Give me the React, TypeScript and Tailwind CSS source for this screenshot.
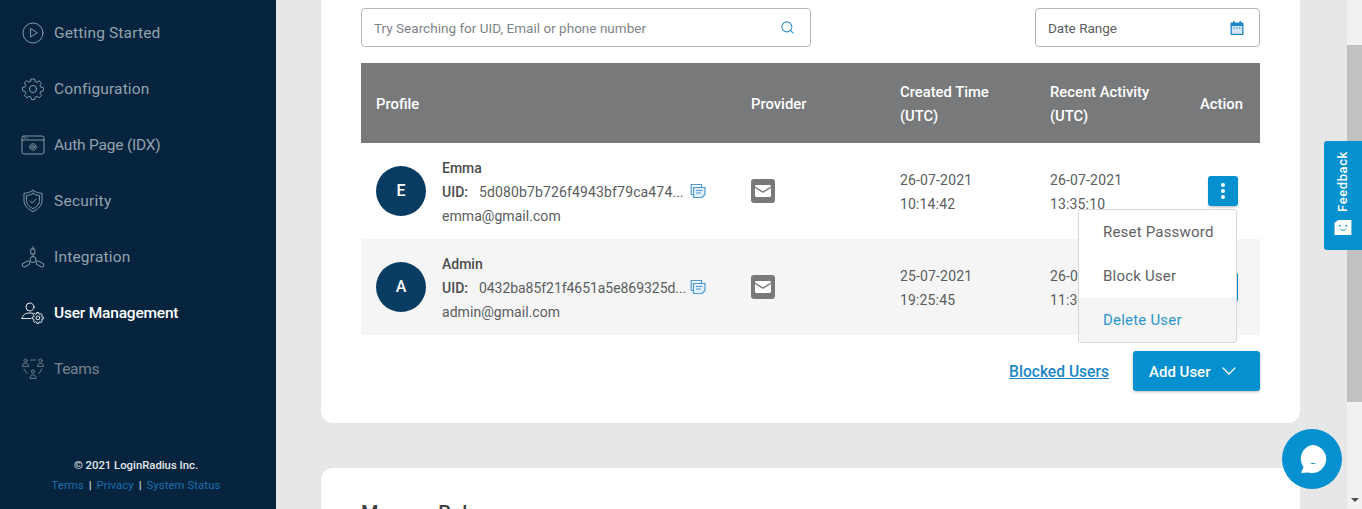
import { ChevronDown, Search } from 'lucide-react';
import type { ReactNode } from 'react';

const font = 'font-["Roboto",sans-serif]';

function Ico({ children }: { children: ReactNode }) {
  return (
    <svg viewBox="0 0 24 24" fill="none" stroke="currentColor" strokeWidth="0.9" strokeLinecap="round" strokeLinejoin="round" className="h-[24px] w-[24px] shrink-0">
      {children}
    </svg>
  );
}

const GearPath = 'M10.3 2h3.4l.5 2.6 1.7.7 2.2-1.5 2.4 2.4-1.5 2.2.7 1.7 2.6.5v3.4l-2.6.5-.7 1.7 1.5 2.2-2.4 2.4-2.2-1.5-1.7.7-.5 2.6h-3.4l-.5-2.6-1.7-.7-2.2 1.5-2.4-2.4 1.5-2.2-.7-1.7L1.5 13.8v-3.4l2.6-.5.7-1.7-1.5-2.2 2.4-2.4 2.2 1.5 1.7-.7z';

const navItems: { label: string; active?: boolean; dim?: boolean; track: string; icon: ReactNode }[] = [
  {
    label: 'Getting Started',
    track: 'tracking-[0.15px]',
    icon: (
      <Ico>
        <circle cx="12" cy="12" r="10" />
        <path d="M9.5 8v8l6.5-4z" />
      </Ico>
    ),
  },
  {
    label: 'Configuration',
    track: 'tracking-[0.15px]',
    icon: (
      <Ico>
        <path d={GearPath} />
        <circle cx="12" cy="12" r="3.6" />
      </Ico>
    ),
  },
  {
    label: 'Auth Page (IDX)',
    track: 'tracking-[-0.2px]',
    icon: (
      <Ico>
        <rect x="1" y="3" width="22" height="18" rx="2" />
        <path d="M1 7h22M3.2 5h.6M5.6 5h.6" />
        <circle cx="12" cy="14" r="1.4" />
        <circle cx="12" cy="14" r="3.2" strokeDasharray="1.4 0.6" />
      </Ico>
    ),
  },
  {
    label: 'Security',
    track: 'tracking-[0.25px]',
    icon: (
      <Ico>
        <path d="M12 1.5c3 1.8 5.6 2.6 9 2.8v7.2c0 5-3.6 8.6-9 11-5.400-2.400-9-6-9-11V4.300c3.400-.2 6-1 9-2.800z" />
        <path d="M12 4.500c2.200 1.300 4.200 1.900 6.500 2.100v5c0 3.600-2.600 6.200-6.500 8-3.900-1.800-6.500-4.400-6.500-8v-5c2.300-.2 4.300-.8 6.500-2.100z" />
        <path d="M9 11.800l2.200 2.200 4-4" />
      </Ico>
    ),
  },
  {
    label: 'Integration',
    track: 'tracking-[0.2px]',
    icon: (
      <Ico>
        <path d="M12 1.500v2.500M10.200 4h3.600v5h-3.600zM12 9v2.500" />
        <circle cx="12" cy="14.500" r="3" />
        <rect x="15" y="17" width="8" height="4" rx="2" transform="rotate(30 19 19)" />
        <rect x="1" y="17" width="8" height="4" rx="2" transform="rotate(-30 5 19)" />
      </Ico>
    ),
  },
  {
    label: 'User Management',
    active: true,
    track: 'tracking-[-0.2px]',
    icon: (
      <Ico>
        <circle cx="9" cy="6" r="4" />
        <path d="M1 17.500c.6-3.600 3.200-5.500 8-5.500 1.200 0 2.300.1 3.200.4M1 17.500h9" />
        <g transform="translate(10.500 10.500) scale(.53)">
          <path d={GearPath} strokeWidth="1.700" />
          <circle cx="12" cy="12" r="3.600" strokeWidth="1.700" />
        </g>
      </Ico>
    ),
  },
  {
    label: 'Teams',
    dim: true,
    track: 'tracking-[-0.3px]',
    icon: (
      <Ico>
        <circle cx="4.500" cy="3.500" r="1.600" />
        <path d="M1.500 9c0-1.800 1.200-2.800 3-2.800s3 1 3 2.800z" />
        <circle cx="19.500" cy="3.500" r="1.600" />
        <path d="M16.500 9c0-1.800 1.200-2.800 3-2.800s3 1 3 2.800z" />
        <circle cx="12" cy="14.500" r="1.600" />
        <path d="M9 21c0-2 1.200-3.200 3-3.200s3 1.200 3 3.200z" />
        <path d="M9.500 3h5M3 12l3 4.500M21 12l-3 4.500" />
      </Ico>
    ),
  },
];

function Sidebar() {
  return (
    <aside className="flex h-full w-[276px] shrink-0 flex-col bg-[#06243e]">
      <nav className="flex flex-col pl-[21px] pt-[5px]">
        {navItems.map((item) => (
          <div
            key={item.label}
            className={`flex h-[56px] items-center gap-[9px] text-[15.500px] ${item.track} ${
              item.active ? 'font-medium text-white' : item.dim ? 'text-[#77858f]' : 'text-[#92a2ae]'
            }`}
          >
            {item.icon}
            <span className="pt-[2px]">{item.label}</span>
          </div>
        ))}
      </nav>
      <div className="mt-auto pb-[13px] pr-[4px] text-center text-[11.300px] leading-[20px]">
        <div className="font-medium text-[#e4e8ea]">© 2021 LoginRadius Inc.</div>
        <div className="tracking-[0.1px] text-[#1a6fae]">
          Terms <span className="mx-[2px] font-bold text-[#d5dde0]">|</span> Privacy{' '}
          <span className="mx-[2px] font-bold text-[#d5dde0]">|</span> System Status
        </div>
      </div>
    </aside>
  );
}

function CopyIcon() {
  return (
    <svg viewBox="0 0 16 16" fill="none" stroke="#4a9bd4" strokeWidth="1.200" className="mb-[3px] ml-[3px] h-[16px] w-[16px] shrink-0">
      <path d="M3 11.500H1.200V1.500h10.300V4" />
      <path d="M3.500 4.500h11.500v7l-3 3H3.500z" fill="#e3f0fa" />
      <path d="M6 7.500h6.500M6 10h5" />
    </svg>
  );
}

function MailBadge() {
  return (
    <div className="flex h-[24px] w-[24px] items-center justify-center rounded-[3px] bg-[#77797b]">
      <svg viewBox="0 0 16 12" className="h-[12px] w-[16px]" fill="#fff">
        <path d="M1.500 0h13c.8 0 1.500.6 1.500 1.400L8 6.300 0 1.400C0 .6.700 0 1.500 0z" />
        <path d="M0 3.100l8 4.900 8-4.900v7.400c0 .8-.7 1.500-1.500 1.500h-13C.7 12 0 11.300 0 10.500z" />
      </svg>
    </div>
  );
}

function DotsButton() {
  return (
    <div className="flex h-[30px] w-[30px] flex-col items-center justify-center gap-[2px] rounded-[3px] bg-[#0590cf] shadow-[0_2px_3px_-1px_rgba(0,0,0,0.3)]">
      <span className="h-[4px] w-[4px] rounded-full bg-white" />
      <span className="h-[4px] w-[4px] rounded-full bg-white" />
      <span className="h-[4px] w-[4px] rounded-full bg-white" />
    </div>
  );
}

const rowGrid = 'grid grid-cols-[375px_149px_150px_150px_1fr] px-[15px]';

const users = [
  { name: 'Emma', letter: 'E', uid: '5d080b7b726f4943bf79ca474...', track: 'tracking-[0.14px]', email: 'emma@gmail.com', created: ['26-07-2021', '10:14:42'], recent: ['26-07-2021', '13:35:10'], bg: 'bg-white' },
  { name: 'Admin', letter: 'A', uid: '0432ba85f21f4651a5e869325d...', track: 'tracking-[-0.05px]', email: 'admin@gmail.com', created: ['25-07-2021', '19:25:45'], recent: ['26-07-2021', '11:37:02'], bg: 'bg-[#f5f5f5]' },
];

function UserRow({ user }: { user: (typeof users)[number] }) {
  return (
    <div className={`${rowGrid} h-[96px] items-center ${user.bg}`}>
      <div className="flex items-center gap-[16px]">
        <div className="flex h-[50px] w-[50px] items-center justify-center rounded-full bg-[#083c63] text-[16px] font-medium text-white">
          {user.letter}
        </div>
        <div className="pt-[2px] text-[14px] leading-[24px] text-[#5a5d60]">
          <div className="font-medium text-[#4a4d50]">{user.name}</div>
          <div className="flex items-center">
            <span className="mr-[11px] font-medium text-[#4a4d50]">UID:</span>
            <span className={`w-[208px] whitespace-nowrap ${user.track}`}>{user.uid}</span>
            <CopyIcon />
          </div>
          <div className="tracking-[0.05px]">{user.email}</div>
        </div>
      </div>
      <MailBadge />
      <div className="pt-[2px] text-[14px] leading-[24px] tracking-[0.15px] text-[#5a5d60]">
        {user.created.map((t) => (
          <div key={t}>{t}</div>
        ))}
      </div>
      <div className="pt-[2px] text-[14px] leading-[24px] tracking-[0.15px] text-[#5a5d60]">
        {user.recent.map((t) => (
          <div key={t}>{t}</div>
        ))}
      </div>
      <div className="flex justify-end pr-[7px]">
        <DotsButton />
      </div>
    </div>
  );
}

function UserCard() {
  return (
    <section className="relative h-[423px] rounded-b-[12px] bg-white px-[40px] pt-[8px]">
      <div className="flex justify-between">
        <div className="flex h-[39px] w-[450px] items-center justify-between rounded-[4px] border border-[#b5b8ba] pl-[12px] pr-[15px] text-[13.500px] tracking-[0.02px] text-[#80848a]">
          <span className="pt-[2px]">Try Searching for UID, Email or phone number</span>
          <Search size={15} color="#2d8fc8" strokeWidth={1.700} />
        </div>
        <div className="flex h-[39px] w-[225px] items-center justify-between rounded-[4px] border border-[#b5b8ba] pl-[12px] pr-[15px] text-[13.500px] text-[#5a5d60]">
          <span className="pt-[2px]">Date Range</span>
          <svg viewBox="0 0 14 14" className="h-[14px] w-[14px]">
            <path d="M3 0h1.500v1.500h5V0H11v1.500h1.500c.6 0 1 .4 1 1V13c0 .6-.4 1-1 1h-11c-.6 0-1-.4-1-1V2.500c0-.6.4-1 1-1H3z" fill="#1c86c5" />
            <rect x="1.800" y="5" width="10.400" height="7.800" fill="#d6e6f2" />
            <path d="M3.500 7h1.500M6.300 7h1.500M9 7h1.500" stroke="#1c86c5" strokeWidth="1" />
          </svg>
        </div>
      </div>
      <div className="mt-[16px]">
        <div className={`${rowGrid} h-[80px] items-center bg-[#77797b] pt-[2px] text-[14.800px] font-medium leading-[24px] text-white`}>
          <div>Profile</div>
          <div>Provider</div>
          <div>
            Created Time
            <br />
            (UTC)
          </div>
          <div>
            Recent Activity
            <br />
            (UTC)
          </div>
          <div>Action</div>
        </div>
        {users.map((u) => (
          <UserRow key={u.name} user={u} />
        ))}
      </div>
      <div className="mt-[16px] flex items-center justify-end gap-[24px]">
        <span className="pt-[4px] text-[15.600px] font-medium text-[#1c86c5] underline">Blocked Users</span>
        <div className="flex h-[40px] w-[127px] items-center gap-[7px] rounded-[3px] bg-[#0590cf] pl-[16px] text-[15px] font-medium text-white shadow-[0_1px_3px_rgba(0,0,0,0.25)]">
          <span className="pt-[2px]">Add User</span>
          <ChevronDown size={24} strokeWidth={1.300} />
        </div>
      </div>
      {/* open action menu */}
      <div className="absolute left-[757px] top-[209px] w-[159px] overflow-hidden rounded-[3px] border border-[#d8d8d8] bg-white text-[15px] tracking-[0.2px] text-[#5f6265]">
        <div className="flex h-[44px] items-center pl-[24px]">Reset Password</div>
        <div className="flex h-[44px] items-center pl-[24px]">Block User</div>
        <div className="flex h-[44px] items-center bg-[#f5f5f5] pl-[24px] text-[#2d95d0]">Delete User</div>
      </div>
    </section>
  );
}

function Scrollbar() {
  return (
    <div className="flex h-full w-[15px] shrink-0 flex-col bg-[#f1f1f1]">
      <div className="h-[45px]" />
      <div className="h-[357px] bg-[#c1c1c1]" />
      <div className="mt-auto flex h-[15px] items-start justify-center pt-[4px]">
        <div className="h-0 w-0 border-x-[4px] border-t-[4px] border-x-transparent border-t-[#505050]" />
      </div>
    </div>
  );
}

export default function App() {
  return (
    <div className={`relative flex h-[509px] w-[1362px] overflow-hidden bg-[#e7e7e7] ${font}`}>
      <Sidebar />
      <main className="flex-1 pl-[45px] pr-[47px]">
        <UserCard />
        <section className="mt-[45px] h-[80px] rounded-t-[12px] bg-white px-[40px] pt-[30px] text-[20px] font-medium text-[#3c4043]">
          Manage Roles
        </section>
      </main>
      <Scrollbar />
      {/* feedback tab */}
      <div className="absolute left-[1324px] top-[141px] flex h-[109px] w-[38px] flex-col items-center justify-end rounded-l-[3px] bg-[#0590cf] pb-[15px]">
        <span className="mb-[8px] text-[13px] font-medium tracking-[0.6px] text-white [writing-mode:vertical-rl] rotate-180">
          Feedback
        </span>
        <svg viewBox="0 0 18 16" className="h-[15px] w-[18px]">
          <path d="M0 3l4-3h14v16H0z" fill="#fff" />
          <circle cx="5.500" cy="6" r="1" fill="#0590cf" />
          <circle cx="12.500" cy="6" r="1" fill="#0590cf" />
          <path d="M6 10c1.500 1.300 4.500 1.300 6 0" stroke="#0590cf" strokeWidth="1" fill="none" />
        </svg>
      </div>
      {/* chat bubble */}
      <div className="absolute left-[1282px] top-[429px] flex h-[60px] w-[60px] items-center justify-center rounded-full bg-[#0590cf]">
        <svg viewBox="0 0 30 30" className="h-[30px] w-[30px]">
          <path d="M15 1a14 14 0 1 1-3.500 27.500L4 29l2.500-6A14 14 0 0 1 15 1z" fill="#fff" />
          <path d="M13 19c1.800 1.200 4.500 1.200 6 0z" fill="#0590cf" />
        </svg>
      </div>
    </div>
  );
}
